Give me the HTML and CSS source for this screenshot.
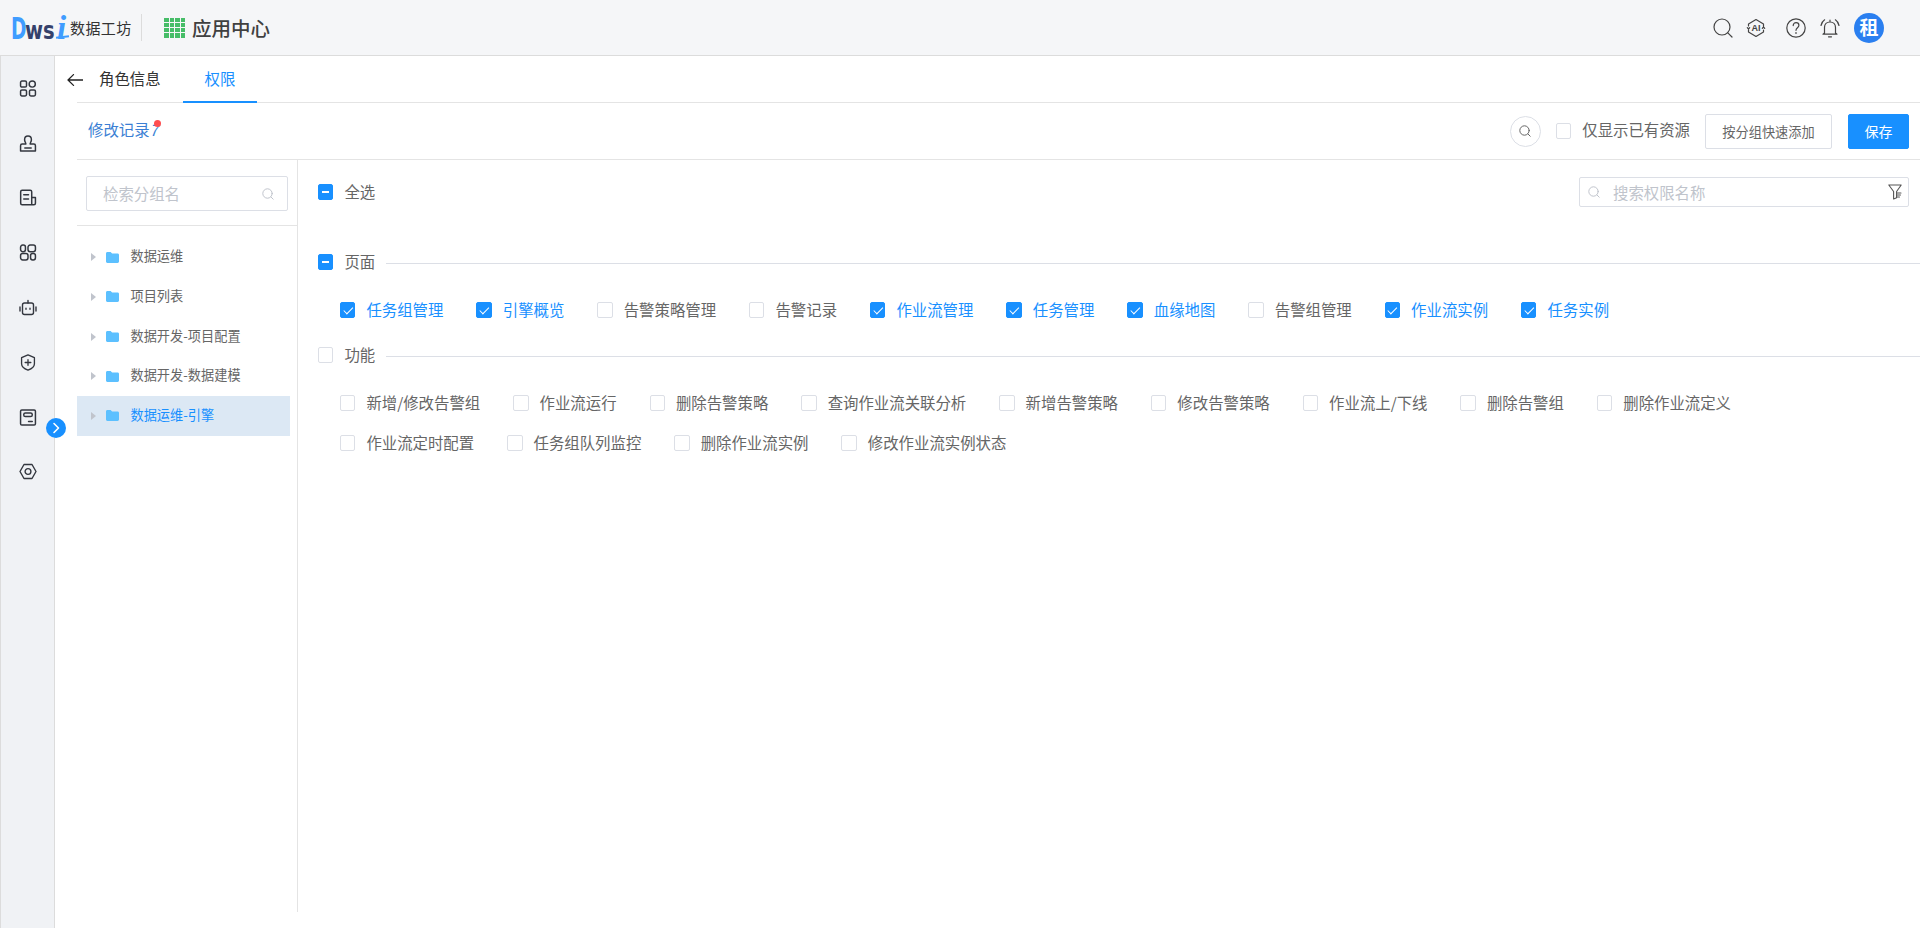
FILE: index.html
```html
<!DOCTYPE html>
<html lang="zh-CN">
<head>
<meta charset="utf-8">
<title>应用中心</title>
<link rel="stylesheet" href="styles.css">
</head>
<body>
<header class="topbar">
  <div class="logo"><span class="l-d">D</span><span class="l-ws">ws</span><span class="l-i">i</span></div>
  <span class="logo-text">数据工坊</span>
  <span class="top-divider"></span>
  <span class="apps"><i></i><i></i><i></i><i></i><i></i><i></i><i></i><i></i><i></i><i></i><i></i><i></i><i></i><i></i><i></i><i></i></span>
  <span class="app-title">应用中心</span>
  <div class="top-tools">
    <svg class="ti" viewBox="0 0 20 20"><circle cx="9" cy="9" r="8"/><path d="M14.8 14.8 19 19"/></svg>
    <span class="ti ti-ai"><svg viewBox="0 0 20 20"><path d="M2.500 8V6L10 1.500 17.500 6v2M17.500 12v2L10 18.500 2.500 14v-2M1.300 9.600 2.500 11l1.200-1.400M16.300 10.400 17.500 9l1.200 1.400"/></svg><b>AI</b></span>
    <svg class="ti ti-help" viewBox="0 0 20 20"><circle cx="10" cy="10" r="9.200"/><path d="M7.200 7.600c0-1.800 1.300-2.900 2.900-2.900s2.800 1.100 2.800 2.600c0 2.400-2.900 2.400-2.900 5"/><path d="M10 14.600v.9"/></svg>
    <svg class="ti ti-bell" viewBox="0 0 20 20"><path d="M4.500 15V9.500C4.500 6.200 6.800 4 10 4s5.500 2.200 5.500 5.500V15l1.500 1.200H3L4.500 15zM8.500 18.800h3M10 2.200V4M1 7.500C1.600 5 2.800 3 4.600 1.800M19 7.500C18.400 5 17.200 3 15.400 1.800"/></svg>
    <span class="avatar">租</span>
  </div>
</header>

<div class="shell">
  <nav class="rail">
    <div class="rail-item"><svg viewBox="0 0 16 16"><rect x="1" y="1" width="5.600" height="5.600" rx="1.300"/><circle cx="12" cy="3.800" r="2.900"/><rect x="1" y="9.400" width="5.600" height="5.600" rx="1.300"/><rect x="9.400" y="9.400" width="5.600" height="5.600" rx="1.300"/></svg></div>
    <div class="rail-item"><svg viewBox="0 0 16 16"><path d="M6 8.500C6 7 4.800 6.500 4.800 4.400 4.800 2.400 6.200 1 8 1s3.200 1.400 3.200 3.400c0 2.100-1.200 2.600-1.200 4.100h3.500c.8 0 1.500.7 1.500 1.500v5H1v-5c0-.8.700-1.500 1.500-1.500H6zM5 12.200h6"/></svg></div>
    <div class="rail-item"><svg viewBox="0 0 16 16"><path d="M11.500 14.900H2.500c-.8 0-1.400-.6-1.400-1.400V2.500c0-.8.600-1.400 1.400-1.400h7.600c.8 0 1.400.6 1.400 1.400v12.400zM11.500 8H15v5.500c0 .8-.6 1.400-1.400 1.400h-2.100M4 5.500h4.500M4 9.500h4.500"/></svg></div>
    <div class="rail-item"><svg viewBox="0 0 16 16"><rect x="1" y="1" width="4.600" height="6.200" rx="2"/><rect x="8" y="1" width="7" height="6.200" rx="2"/><rect x="1" y="9" width="7" height="6" rx="2"/><rect x="10.400" y="9" width="4.600" height="6" rx="2"/></svg></div>
    <div class="rail-item"><svg viewBox="0 0 18 16"><rect x="3.500" y="3.500" width="11" height="11.500" rx="2"/><path d="M9 3.500V1M1 7.500v4M17 7.500v4M7 8.800v1M11 8.800v1"/></svg></div>
    <div class="rail-item"><svg viewBox="0 0 16 18"><path d="M8 1l6.800 2.900v6.300c0 2.900-3 5.400-6.800 6.800-3.800-1.400-6.800-3.900-6.800-6.800V3.900L8 1zM8 6v6M5 9h6"/></svg></div>
    <div class="rail-item"><svg viewBox="0 0 16 16"><rect x="1" y="1" width="14" height="14" rx="1.200"/><rect x="4" y="3.700" width="8" height="3.400" rx="1.500"/><path d="M8.500 11.800h3.500"/></svg></div>
    <div class="rail-item"><svg viewBox="0 0 18 16"><path d="M5 1h8l4 7-4 7H5L1 8l4-7z"/><circle cx="9" cy="8" r="2.900"/></svg></div>
    <button class="rail-toggle" type="button"><svg viewBox="0 0 20 20"><path d="M8 5.500 12.500 10 8 14.500"/></svg></button>
  </nav>

  <main class="main">
    <div class="tabs">
      <svg class="back" viewBox="0 0 16 12"><path d="M16 6H1M6.500.6 1 6l5.500 5.400"/></svg>
      <span class="tab">角色信息</span>
      <span class="tab tab-active">权限</span>
    </div>

    <div class="toolbar">
      <span class="log">修改记录<em>7</em><i class="red-dot"></i></span>
      <div class="toolbar-right">
        <span class="round-search"><svg class="s-icon" viewBox="0 0 12 12"><circle cx="5.500" cy="5.500" r="4.700"/><path d="m9 9 2.200 2.200"/></svg></span>
        <span class="cb"></span>
        <span class="only-own">仅显示已有资源</span>
        <button class="btn" type="button">按分组快速添加</button>
        <button class="btn btn-primary" type="button">保存</button>
      </div>
    </div>

    <div class="content">
      <aside class="groups">
        <div class="groups-search">
          <div class="input input-left"><span class="ph">检索分组名</span><svg class="s-icon s-muted" viewBox="0 0 12 12"><circle cx="5.500" cy="5.500" r="4.700"/><path d="m9 9 2.200 2.200"/></svg></div>
        </div>
        <ul class="tree">
          <li class="node"><i class="caret"></i><svg class="folder" viewBox="0 0 13 11"><path d="M0 1.500C0 .7.600 0 1.400 0h3.200l1.500 1.500h5.500c.8 0 1.400.6 1.400 1.400v6.700c0 .8-.6 1.400-1.400 1.400H1.400C.6 11 0 10.400 0 9.600V1.500z"/></svg><span>数据运维</span></li>
          <li class="node"><i class="caret"></i><svg class="folder" viewBox="0 0 13 11"><path d="M0 1.500C0 .7.600 0 1.400 0h3.200l1.500 1.500h5.500c.8 0 1.400.6 1.400 1.400v6.700c0 .8-.6 1.400-1.400 1.400H1.400C.6 11 0 10.400 0 9.600V1.500z"/></svg><span>项目列表</span></li>
          <li class="node"><i class="caret"></i><svg class="folder" viewBox="0 0 13 11"><path d="M0 1.500C0 .7.600 0 1.400 0h3.200l1.500 1.500h5.500c.8 0 1.400.6 1.400 1.400v6.700c0 .8-.6 1.400-1.400 1.400H1.400C.6 11 0 10.400 0 9.600V1.500z"/></svg><span>数据开发-项目配置</span></li>
          <li class="node"><i class="caret"></i><svg class="folder" viewBox="0 0 13 11"><path d="M0 1.500C0 .7.600 0 1.400 0h3.200l1.500 1.500h5.500c.8 0 1.400.6 1.400 1.400v6.700c0 .8-.6 1.400-1.400 1.400H1.400C.6 11 0 10.400 0 9.600V1.500z"/></svg><span>数据开发-数据建模</span></li>
          <li class="node node-active"><i class="caret"></i><svg class="folder" viewBox="0 0 13 11"><path d="M0 1.500C0 .7.600 0 1.400 0h3.200l1.500 1.500h5.500c.8 0 1.400.6 1.400 1.400v6.700c0 .8-.6 1.400-1.400 1.400H1.400C.6 11 0 10.400 0 9.600V1.500z"/></svg><span>数据运维-引擎</span></li>
        </ul>
      </aside>

      <section class="perms">
        <div class="perms-top">
          <label class="check"><span class="cb cb-half"></span><span class="lbl">全选</span></label>
          <div class="input input-right">
            <svg class="s-icon s-muted" viewBox="0 0 12 12"><circle cx="5.500" cy="5.500" r="4.700"/><path d="m9 9 2.200 2.200"/></svg>
            <span class="ph">搜索权限名称</span>
            <svg class="filter" viewBox="0 0 14 16"><path d="M.8 1h12.400L8.600 7.500v6.200L5.600 15V7.500L.8 1zM9.500 9h3.500M9.500 11h3M9.500 13h2"/></svg>
          </div>
        </div>

        <div class="group-head group-page"><label class="check"><span class="cb cb-half"></span><span class="lbl">页面</span></label><span class="rule"></span></div>
        <div class="items items-page">
          <label class="check on"><span class="cb cb-on"></span><span class="lbl">任务组管理</span></label>
          <label class="check on"><span class="cb cb-on"></span><span class="lbl">引擎概览</span></label>
          <label class="check"><span class="cb"></span><span class="lbl">告警策略管理</span></label>
          <label class="check"><span class="cb"></span><span class="lbl">告警记录</span></label>
          <label class="check on"><span class="cb cb-on"></span><span class="lbl">作业流管理</span></label>
          <label class="check on"><span class="cb cb-on"></span><span class="lbl">任务管理</span></label>
          <label class="check on"><span class="cb cb-on"></span><span class="lbl">血缘地图</span></label>
          <label class="check"><span class="cb"></span><span class="lbl">告警组管理</span></label>
          <label class="check on"><span class="cb cb-on"></span><span class="lbl">作业流实例</span></label>
          <label class="check on"><span class="cb cb-on"></span><span class="lbl">任务实例</span></label>
        </div>

        <div class="group-head group-func"><label class="check"><span class="cb"></span><span class="lbl">功能</span></label><span class="rule"></span></div>
        <div class="items items-func">
          <label class="check"><span class="cb"></span><span class="lbl">新增/修改告警组</span></label>
          <label class="check"><span class="cb"></span><span class="lbl">作业流运行</span></label>
          <label class="check"><span class="cb"></span><span class="lbl">删除告警策略</span></label>
          <label class="check"><span class="cb"></span><span class="lbl">查询作业流关联分析</span></label>
          <label class="check"><span class="cb"></span><span class="lbl">新增告警策略</span></label>
          <label class="check"><span class="cb"></span><span class="lbl">修改告警策略</span></label>
          <label class="check"><span class="cb"></span><span class="lbl">作业流上/下线</span></label>
          <label class="check"><span class="cb"></span><span class="lbl">删除告警组</span></label>
          <label class="check"><span class="cb"></span><span class="lbl">删除作业流定义</span></label>
        </div>
        <div class="items">
          <label class="check"><span class="cb"></span><span class="lbl">作业流定时配置</span></label>
          <label class="check"><span class="cb"></span><span class="lbl">任务组队列监控</span></label>
          <label class="check"><span class="cb"></span><span class="lbl">删除作业流实例</span></label>
          <label class="check"><span class="cb"></span><span class="lbl">修改作业流实例状态</span></label>
        </div>
      </section>
    </div>
  </main>
</div>
</body>
</html>
```

FILE: styles.css
```css
* { box-sizing: border-box; }
html, body { height: 100%; }
body {
  margin: 0;
  overflow: hidden;
  background: #fff;
  color: #666;
  font-family: "Noto Sans CJK SC", "Liberation Sans", sans-serif;
  font-size: 15.4px;
  line-height: 1.2;
}
svg { display: block; fill: none; stroke: #333; stroke-width: 1.4; stroke-linecap: round; stroke-linejoin: round; }
button { font-family: inherit; cursor: pointer; }
ul { margin: 0; padding: 0; list-style: none; }
i, em { font-style: normal; }

/* top bar */
.topbar {
  display: flex;
  align-items: center;
  height: 56px;
  padding-left: 11px;
  background: #f5f6f8;
  border-bottom: 1px solid #dcdcdc;
}
.logo {
  display: flex;
  align-items: baseline;
  width: 59px;
  height: 30px;
  font-family: "DejaVu Sans", sans-serif;
  font-weight: 700;
  line-height: 30px;
}
.l-d {
  width: 14px;
  color: #3f9cff;
  font-size: 30px;
  transform: scaleX(.62);
  transform-origin: left bottom;
}
.l-ws {
  width: 31px;
  color: #35416b;
  font-size: 25px;
  transform: scaleX(.78);
  transform-origin: left bottom;
}
.l-i {
  position: relative;
  width: 12px;
  margin-left: 1px;
  color: #3f9cff;
  font-family: "Liberation Serif", serif;
  font-size: 33px;
  font-style: italic;
}
.l-i::after {
  content: "";
  position: absolute;
  left: -1px;
  bottom: 5px;
  width: 13px;
  height: 2px;
  background: #3f9cff;
  transform: rotate(-6deg);
}
.logo-text { width: 61px; color: #333; font-size: 15px; white-space: nowrap; letter-spacing: .4px; }
.top-divider { width: 1px; height: 27px; margin: 0 22px 0 10px; background: #dcdcdc; }
.apps {
  display: grid;
  grid-template-columns: repeat(4, 4.500px);
  grid-auto-rows: 4.300px;
  gap: 1px;
  width: 21px;
  height: 20px;
}
.apps i { background: #46bd68; }
.app-title { margin-left: 7px; color: #404040; font-size: 19.500px; font-weight: 500; white-space: nowrap; }
.top-tools { display: flex; align-items: center; margin-left: auto; padding-right: 36px; }
.top-tools svg { stroke: #444; stroke-width: 1.200; }
.ti { width: 20px; height: 20px; }
.ti-ai { position: relative; display: block; margin-left: 13px; }
.ti-ai svg { width: 20px; height: 20px; }
.ti-ai b {
  position: absolute;
  top: 3px;
  left: 0;
  width: 20px;
  color: #444;
  font-family: "Liberation Sans", sans-serif;
  font-size: 9px;
  font-weight: 700;
  line-height: 14px;
  text-align: center;
}
.ti-help { margin-left: 20px; }
.ti-bell { margin-left: 14px; }
.avatar {
  display: flex;
  align-items: center;
  justify-content: center;
  width: 30px;
  height: 30px;
  margin-left: 14px;
  border-radius: 50%;
  background: #2a7ff0;
  color: #fff;
  font-size: 19px;
  font-weight: 700;
}

/* layout */
.shell { display: flex; height: 872px; }
.rail {
  position: relative;
  flex: 0 0 55px;
  padding-top: 5px;
  background: #f0f2f5;
  border-left: 1px solid #dcdcdc;
  border-right: 1px solid #dcdcdc;
}
.rail-item { display: flex; align-items: center; justify-content: center; height: 54.800px; }
.rail-item svg { width: 18px; height: 17px; stroke: #33373f; stroke-width: 1.400; }
.rail-toggle {
  position: absolute;
  top: 362px;
  left: 45px;
  width: 20px;
  height: 20px;
  padding: 0;
  border: 0;
  border-radius: 50%;
  background: #1890ff;
}
.rail-toggle svg { width: 20px; height: 20px; stroke: #fff; stroke-width: 1.600; }
.main { flex: 1; min-width: 0; }

/* tabs */
.tabs {
  display: flex;
  align-items: stretch;
  height: 47px;
  margin-left: 22px;
  border-bottom: 1px solid #e4e4e4;
}
.back { align-self: center; width: 16px; height: 12px; margin: 2px -6px 0 -10px; stroke: #222; stroke-width: 1.300; }
.tab {
  display: flex;
  align-items: center;
  height: 47px;
  padding: 0 22px 2px;
  color: #333;
}
.tab-active { color: #1890ff; padding-bottom: 0; border-bottom: 2px solid #1890ff; }

/* toolbar */
.toolbar {
  display: flex;
  align-items: center;
  justify-content: space-between;
  height: 57px;
  margin-left: 22px;
  padding: 0 11px;
  border-bottom: 1px solid #e4e4e4;
}
.log { position: relative; margin-bottom: 4px; color: #3b7fd4; }
.log em { font-style: italic; }
.red-dot {
  position: absolute;
  top: 0;
  right: -3px;
  width: 7px;
  height: 7px;
  border-radius: 50%;
  background: #ff4d4f;
}
.toolbar-right { display: flex; align-items: center; }
.round-search {
  display: flex;
  align-items: center;
  justify-content: center;
  width: 31px;
  height: 31px;
  margin-right: 15px;
  border: 1px solid #dcdfe6;
  border-radius: 50%;
}
.s-icon { width: 12px; height: 12px; stroke: #666; stroke-width: 1; }
.s-muted { stroke: #c0c4cc; }
.only-own { margin: 0 15px 4px 0; white-space: nowrap; }
.btn {
  height: 35px;
  padding: 0;
  border: 1px solid #dcdfe6;
  border-radius: 2px;
  background: #fff;
  color: #666;
  font-size: 13.200px;
}
.toolbar-right .btn { width: 127px; }
.toolbar-right .btn-primary {
  width: 61px;
  margin-left: 16px;
  border-color: #1890ff;
  background: #1890ff;
  color: #fff;
  font-size: 14px;
}

/* content */
.content { display: flex; height: 752px; margin-left: 22px; }
.groups { flex: 0 0 221px; border-right: 1px solid #e4e4e4; }
.groups-search { height: 66px; padding: 16px 9px 0; border-bottom: 1px solid #e4e4e4; }
.input {
  display: flex;
  align-items: center;
  border: 1px solid #dcdfe6;
  border-radius: 2px;
  background: #fff;
}
.ph { color: #c0c4cc; white-space: nowrap; }
.input-left { justify-content: space-between; width: 202px; height: 35px; padding: 0 13px 0 16px; }
.tree { padding-top: 11.600px; }
.node {
  display: flex;
  align-items: center;
  width: 213px;
  height: 39.600px;
  padding-left: 14px;
  font-size: 13.200px;
  white-space: nowrap;
}
.node span { padding-bottom: 2px; }
.node-active { background: #dce8f4; color: #1890ff; }
.caret {
  width: 0;
  height: 0;
  border-top: 4px solid transparent;
  border-bottom: 4px solid transparent;
  border-left: 5px solid #c0c4cc;
}
.folder { width: 13px; height: 11px; margin: 0 11.500px 0 10px; fill: #5cc0ff; stroke: none; }

/* permissions */
.perms { flex: 1; min-width: 0; padding-left: 20px; }
.perms-top {
  display: flex;
  align-items: center;
  justify-content: space-between;
  height: 30px;
  margin: 17px 11px 0 0;
}
.input-right { width: 330px; height: 30px; padding: 0 6px 0 8px; }
.input-right .ph { margin-left: 13px; }
.filter { width: 14px; height: 16px; margin-left: auto; stroke: #555; stroke-width: 1.100; }
.check { display: flex; align-items: center; white-space: nowrap; }
.lbl { padding-bottom: 2px; }
.on { color: #1890ff; }
.cb {
  flex: 0 0 auto;
  display: block;
  position: relative;
  width: 15.400px;
  height: 15.400px;
  margin-right: 11px;
  border: 1px solid #dcdfe6;
  border-radius: 2px;
  background: #fff;
}
.cb-on, .cb-half { border-color: #1890ff; background: #1890ff; }
.cb-half::after {
  content: "";
  position: absolute;
  top: 5.700px;
  left: 3px;
  width: 7.400px;
  height: 2px;
  background: #fff;
}
.cb-on::after {
  content: "";
  position: absolute;
  top: 2px;
  left: 4.700px;
  width: 4px;
  height: 7.500px;
  border: 1px solid #fff;
  border-top: 0;
  border-left: 0;
  transform: rotate(45deg);
}
.group-head { display: flex; align-items: center; height: 20px; }
.group-page { margin-top: 45px; }
.group-func { margin-top: 15px; }
.rule { flex: 1; height: 1px; margin: 2px 0 0 11px; background: #dcdfe6; }
.items { display: flex; align-items: center; gap: 33px; height: 40px; padding-left: 22px; }
.items-page { margin-top: 18px; }
.items-func { margin-top: 18px; }
```
